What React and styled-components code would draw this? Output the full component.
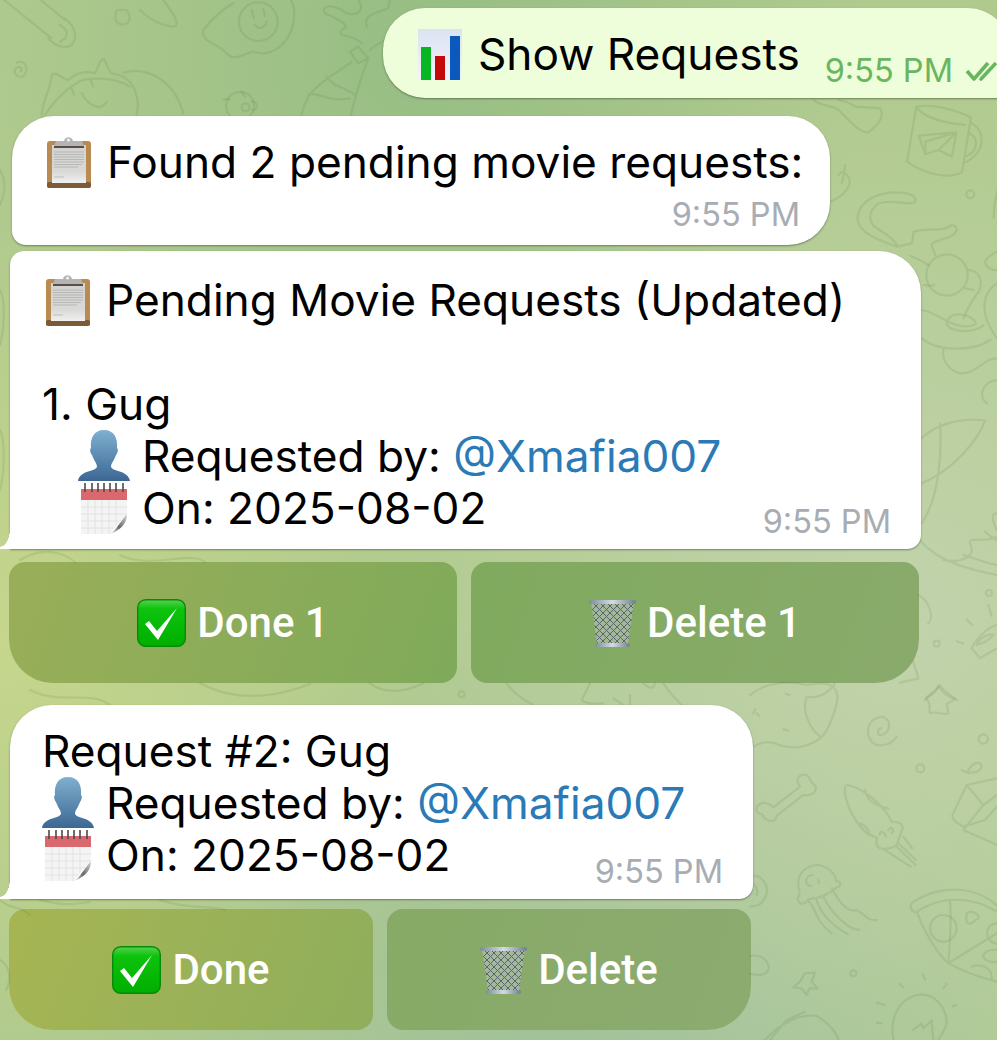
import styled, { createGlobalStyle } from "styled-components";

const GlobalStyle = createGlobalStyle`
  html, body {
    margin: 0;
    padding: 0;
  }
  body {
    font-family: Inter, Roboto, "Liberation Sans", sans-serif;
  }
`;

const Chat = styled.div`
  position: relative;
  width: 997px;
  height: 1040px;
  overflow: hidden;
  padding-top: 8px;
  box-sizing: border-box;
  display: flex;
  flex-direction: column;
  background:
    radial-gradient(circle at 0 640px, #c6d68c 0, rgba(198, 214, 140, 0) 420px),
    radial-gradient(circle at 900px 620px, #c2d3ac 0, rgba(194, 211, 172, 0) 560px),
    radial-gradient(circle at 620px 1120px, #9dbf9c 0, rgba(157, 191, 156, 0) 520px),
    radial-gradient(circle at 420px 40px, #96bd84 0, rgba(150, 189, 132, 0) 440px),
    #b0ca8e;
`;

const Wallpaper = styled.svg`
  position: absolute;
  left: 0;
  top: 0;
  width: 997px;
  height: 1040px;
  fill: none;
  stroke: rgba(62, 104, 42, 0.12);
  stroke-width: 2.2px;
  stroke-linecap: round;
  stroke-linejoin: round;

  * {
    vector-effect: non-scaling-stroke;
  }
`;

const Bubble = styled.div`
  position: relative;
  box-sizing: border-box;
  width: ${(p) => p.$width}px;
  margin-left: ${(p) => p.$left}px;
  margin-top: ${(p) => p.$top}px;
  padding: ${(p) => p.$padTop}px 0 ${(p) => p.$padBottom}px ${(p) => p.$padLeft}px;
  border-radius: ${(p) => p.$radius};
  background: ${(p) => (p.$out ? "#eefedb" : "#ffffff")};
  box-shadow: 0 1px 2px rgba(40, 62, 24, 0.5);
  color: #000000;
  font-size: 44.2px;
  line-height: 52px;

  ${(p) =>
    p.$tail &&
    `
    &::before {
      content: "";
      position: absolute;
      left: -10px;
      bottom: 0;
      width: 10px;
      height: 20px;
      background: radial-gradient(ellipse 10px 18px at 0 0, transparent 97%, #ffffff 100%);
    }
  `}
`;

const Line = styled.div`
  display: flex;
  align-items: center;
  height: 52px;
  padding-left: ${(p) => p.$indent || 0}px;
  white-space: nowrap;
`;

const EmojiSlot = styled.span`
  flex: none;
  display: flex;
  justify-content: center;
  width: 52px;
  margin-right: 12px;
`;

const Mention = styled.span`
  color: #2a7ab8;
  margin-left: 0.28em;
`;

const Meta = styled.div`
  position: absolute;
  right: ${(p) => p.$right}px;
  bottom: ${(p) => p.$bottom}px;
  display: flex;
  align-items: center;
  gap: 12px;
  font-size: 32.5px;
  line-height: 40px;
  color: ${(p) => (p.$out ? "#69b560" : "#a7adb3")};
`;

const ButtonRow = styled.div`
  display: grid;
  grid-template-columns: 1fr 1fr;
  gap: 14px;
  width: ${(p) => p.$width}px;
  margin-left: 9px;
  margin-top: ${(p) => p.$top}px;
`;

const KeyButton = styled.button`
  display: flex;
  align-items: center;
  justify-content: center;
  gap: 11px;
  height: 121px;
  padding: 0;
  border: 0;
  border-radius: ${(p) => (p.$side === "left" ? "16px 16px 16px 44px" : "16px 16px 44px 16px")};
  background: linear-gradient(110deg, ${(p) => p.$from}, ${(p) => p.$to});
  color: #ffffff;
  font-family: Roboto, "Liberation Sans", sans-serif;
  font-size: 42px;
  font-weight: 500;
`;

function ChartEmoji() {
  return (
    <svg width="44" height="51" viewBox="0 0 44 51">
      <defs>
        <linearGradient id="chartBg" x1="0" y1="0" x2="0" y2="1">
          <stop offset="0" stopColor="#dbe3f2" />
          <stop offset="1" stopColor="#f2f4fa" />
        </linearGradient>
      </defs>
      <rect width="44" height="51" fill="url(#chartBg)" />
      <rect x="3" y="18" width="10" height="33" fill="#08b522" />
      <rect x="17" y="27" width="10" height="24" fill="#c30a08" />
      <rect x="32" y="7" width="10" height="44" fill="#0b59bd" />
    </svg>
  );
}

function ClipboardEmoji() {
  return (
    <svg width="46" height="52" viewBox="0 0 46 52">
      <defs>
        <linearGradient id="clipPaper" x1="0" y1="0" x2="0" y2="1">
          <stop offset="0" stopColor="#d2d2d0" />
          <stop offset="0.7" stopColor="#d9d9d8" />
          <stop offset="1" stopColor="#f0f0f0" />
        </linearGradient>
      </defs>
      <rect x="1" y="5" width="44" height="47" rx="3" fill="#b98a52" />
      <rect x="1" y="46" width="44" height="6" rx="2" fill="#7c5a36" />
      <rect x="6" y="9" width="34" height="38" fill="url(#clipPaper)" />
      <path d="M8 16h30M8 18.5h30M8 21h30M8 23.5h30M8 26h30M8 28.5h28M8 31h24M8 41h10" stroke="#9a9a9a" strokeWidth="0.7" opacity="0.7" />
      <path d="M8 11h30" stroke="#57504a" strokeWidth="2" />
      <path d="M8 10 L10 5 H18 C19 0 26 0 27 5 H36 L38 10 Z" fill="#b4b4b2" />
      <circle cx="22.5" cy="4" r="1.5" fill="#f2f2f2" />
    </svg>
  );
}

function PersonEmoji() {
  return (
    <svg width="52" height="52" viewBox="0 0 52 52">
      <defs>
        <linearGradient id="personFill" x1="0" y1="0" x2="0" y2="1">
          <stop offset="0" stopColor="#7fb0cf" />
          <stop offset="1" stopColor="#3c6794" />
        </linearGradient>
      </defs>
      <path
        d="M26 0 C36 0 40 8 39 18 C41 20 39 24 38 25 C36 31 33 33 33 37 C35 42 50 40 52 51 H0 C2 40 17 42 19 37 C19 33 16 31 14 25 C13 24 11 20 13 18 C12 8 16 0 26 0 Z"
        fill="url(#personFill)"
      />
    </svg>
  );
}

function CalendarEmoji() {
  return (
    <svg width="46" height="52" viewBox="0 0 46 52">
      <defs>
        <linearGradient id="calCurl" x1="0" y1="1" x2="1" y2="0">
          <stop offset="0" stopColor="#ffffff" />
          <stop offset="0.45" stopColor="#6a6a6a" />
          <stop offset="1" stopColor="#d8d8d8" />
        </linearGradient>
      </defs>
      <rect y="7" width="46" height="45" fill="#f4f4f4" />
      <rect y="7" width="46" height="11" fill="#d9696e" />
      <path d="M7 18v34M14 18v34M21 18v34M28 18v34M35 18v34M0 25h46M0 32h46M0 39h46M0 46h46" stroke="#e2e2e2" strokeWidth="1" />
      <path d="M4 1v9M11 1v9M17 1v9M23 1v9M29 1v9M35 1v9M42 1v9" stroke="#4a4a4a" strokeWidth="1.6" />
      <path d="M30 52 C33 44 40 40 46 32 V52 Z" fill="#ffffff" />
      <path d="M28 52 C34 50 36 44 46 32 C46 42 40 46 34 50 Z" fill="url(#calCurl)" />
    </svg>
  );
}

function CheckEmoji() {
  return (
    <svg width="49" height="48" viewBox="0 0 49 48">
      <defs>
        <linearGradient id="checkFill" x1="0" y1="0" x2="0" y2="1">
          <stop offset="0" stopColor="#55d24f" />
          <stop offset="0.2" stopColor="#0dc30d" />
          <stop offset="1" stopColor="#00ae00" />
        </linearGradient>
      </defs>
      <rect x="0.7" y="0.7" width="47.6" height="46.6" rx="8" fill="url(#checkFill)" stroke="#078a0a" strokeWidth="1.4" />
      <path d="M8 25 L12 22 L20 32 L40 9 L21 41 Z" fill="#ffffff" strokeLinejoin="round" />
    </svg>
  );
}

function TrashEmoji() {
  return (
    <svg width="47" height="48" viewBox="0 0 47 48">
      <defs>
        <pattern id="trashMesh" width="7" height="7" patternUnits="userSpaceOnUse">
          <path d="M0 0 L7 7 M7 0 L0 7" stroke="#56656e" strokeWidth="1" />
        </pattern>
        <linearGradient id="trashRim" x1="0" y1="0" x2="1" y2="0">
          <stop offset="0" stopColor="#7c8c9b" />
          <stop offset="0.5" stopColor="#d4dce3" />
          <stop offset="1" stopColor="#6f7f8e" />
        </linearGradient>
      </defs>
      <path d="M2 3 L8 45 H39 L45 3 Z" fill="#b8c1bd" fillOpacity="0.6" />
      <path d="M2 3 L8 45 H39 L45 3 Z" fill="url(#trashMesh)" />
      <rect x="0" y="1" width="47" height="4" rx="2" fill="url(#trashRim)" />
      <rect x="6" y="44" width="35" height="4" rx="2" fill="url(#trashRim)" />
    </svg>
  );
}

function DoubleCheck() {
  return (
    <svg width="32" height="24" viewBox="0 0 32 24" fill="none" stroke="#69b560" strokeWidth="3.6" strokeLinejoin="round">
      <path d="M2 12 L9 20 L23 4" />
      <path d="M15 19 L16 20 L31 4" />
    </svg>
  );
}

function WallpaperDoodles() {
  return (
    <Wallpaper viewBox="0 0 997 1040">
      <g transform="scale(0.3333)">
        <path d="M0 -10 L155 115 M110 -10 L195 60 M195 55 C225 80 235 110 215 135 C195 150 160 135 145 115 M180 75 C205 90 210 110 180 125" />
        <path d="M350 30 C340 60 350 78 375 72 C395 65 390 45 380 30 Z M420 30 C450 60 490 80 525 80 C540 70 520 40 490 0" />
        <path d="M700 10 C680 20 640 50 610 90 C600 125 650 130 675 155 C700 190 730 160 760 155 C800 170 850 150 875 90 C890 40 880 10 870 -5" />
        <circle cx="775" cy="65" r="58" />
        <path d="M755 30 L762 55 M790 28 L795 48 M765 75 C775 90 795 85 800 65" />
        <path d="M1075 140 L1050 155 L1075 190 L1105 175 Z M1055 185 C1020 215 960 240 925 290 C910 320 905 340 900 360 M1105 175 C1085 230 1065 280 1050 360 M980 230 C1000 260 1030 260 1065 285 M925 285 C950 270 980 310 1050 295" />
        <path d="M1085 130 C1060 100 1000 115 1030 85 C1060 80 1000 50 975 40 C960 15 1000 10 1040 40 C1085 50 1090 20 1075 0 M1110 150 C1130 130 1150 125 1175 110 M1100 80 C1090 40 1130 40 1165 25 L1170 0" />
        <path d="M50 188 C75 175 90 210 70 228 C50 238 38 215 48 205 C58 195 70 205 62 215" />
        <path d="M125 350 C125 300 150 280 155 225 C165 210 190 240 205 240 C235 210 270 215 285 220 C295 200 305 170 312 178 C320 190 325 210 335 220 C370 225 400 240 410 290 C420 320 410 345 405 360 M370 218 C430 200 520 230 550 340 M250 240 C310 230 360 240 390 260 M245 280 C260 310 300 340 320 305 M135 345 C170 290 220 250 250 240 M215 265 L222 285 M272 240 L280 260" />
        <circle cx="720" cy="318" r="42" />
        <circle cx="737" cy="322" r="12" />
        <path d="M670 298 L690 298 M725 275 L735 290 M755 305 C775 305 775 330 758 330" />
      </g>

      <g transform="translate(797 95) scale(0.3333)">
        <path d="M358 35 C400 25 480 45 522 68 L495 232 C450 255 380 235 330 200 Z M358 35 C380 70 450 85 505 90 M525 85 C565 110 570 170 500 205 M518 115 C545 130 545 170 505 185" />
        <path d="M365 122 L478 112 L465 185 L425 165 L385 178 Z M385 178 L385 140 L478 112 L425 165" />
        <circle cx="520" cy="298" r="12" />
        <path d="M355 320 C360 300 330 290 280 293 C220 300 180 330 182 375 C190 420 260 440 300 455 L345 445 L350 410 C390 395 430 415 465 390 C490 395 480 420 445 430 C420 440 400 440 405 455 L415 480 M355 320 C340 335 290 310 245 325 C215 345 210 380 240 400 C260 415 280 420 300 450" />
        <circle cx="450" cy="540" r="62" />
        <path d="M340 482 C360 490 380 500 395 510 M380 570 C390 570 400 575 412 570 M515 525 C550 530 560 560 545 590 C530 610 510 640 500 670 M505 580 L530 585" />
        <path d="M600 470 C560 490 550 510 590 525 L600 525 M600 565 C560 590 540 650 600 730 M375 645 C420 650 470 710 530 690 C560 680 470 630 450 680 C440 710 530 720 560 690 M375 730 C420 770 530 770 580 735 M440 760 C430 800 470 850 520 830 C560 810 570 790 600 790 M590 370 C590 330 595 310 600 290 M600 855 C560 860 540 900 570 925" />
        <path d="M100 320 C150 300 170 260 150 240 C140 225 130 232 125 240 M145 210 L135 265" />
        <path d="M50 15 C70 35 120 30 130 50 C160 80 190 115 215 112 C240 90 265 70 250 40 L175 35 C150 15 130 20 125 15" />
      </g>

      <g transform="translate(890 400) scale(0.3333)">
        <path d="M95 115 C130 80 200 50 285 62 C265 120 190 210 95 250 M150 70 C155 150 150 290 95 370 M80 410 C120 460 170 495 320 525 M220 465 C270 480 290 490 320 495 M240 430 C260 470 215 490 160 480 M320 340 C300 340 310 370 320 390 M285 395 C300 410 320 420 320 420 M240 425 C250 410 280 430 320 410" />
        <circle cx="297" cy="579" r="9" />
        <circle cx="140" cy="731" r="9" />
        <path d="M295 615 L305 648 M230 658 L246 675 M200 724 L220 731 M245 745 C265 705 300 680 321 675 M245 745 L270 775 M270 775 L321 745 M260 735 C270 710 300 700 310 705 C300 720 280 730 260 735 M105 900 C115 880 135 880 150 855 C165 880 185 885 200 900 M85 585 C115 600 135 650 115 670 M70 785 L85 835 L30 848" />
      </g>

      <g transform="translate(750 680) scale(0.3333)">
        <path d="M0 45 C40 10 110 0 170 15 C240 0 265 20 262 60 C250 120 225 165 210 175 C170 205 120 210 75 190 C40 180 20 195 0 205 M255 10 C230 50 190 55 170 50 C155 90 175 140 210 170 M15 88 L10 100 M20 100 L28 108 M100 148 L116 152 M108 42 L118 45" />
        <path d="M565 18 C575 30 580 45 615 58 L590 72 L595 100 C585 110 565 90 540 100 C535 85 545 70 528 55 C545 45 555 40 565 18" />
        <path d="M440 170 C425 195 385 205 365 185 C340 150 360 115 395 110 C425 115 425 155 395 165 C380 165 380 145 395 145" />
        <circle cx="700" cy="177" r="14" />
        <circle cx="511" cy="265" r="12" />
        <circle cx="310" cy="880" r="9" />
        <path d="M30 372 C15 380 15 400 35 402 C45 425 75 432 80 408 L160 345 C185 350 205 335 195 315 C180 310 180 290 170 285 C145 280 135 300 150 320 L70 382 C60 370 40 365 30 372" />
        <path d="M285 320 C280 360 310 420 345 455 C360 470 380 470 382 475 C375 490 380 505 400 507 L482 560 M440 500 L497 555 M445 490 L498 540 M460 470 L487 505 M290 315 C330 320 400 370 425 425 C440 425 460 430 458 445 C450 465 445 480 440 495 C430 505 415 505 400 507 M345 330 C350 365 385 380 415 385 M325 430 C340 430 355 445 360 465 M390 465 C385 450 405 455 408 470 M415 450 C425 435 435 450 425 460" />
        <path d="M145 620 C140 580 170 555 205 555 C240 560 260 590 258 603 C275 605 275 620 260 622 C240 640 210 655 175 658 C160 680 145 670 143 655 C150 645 150 630 145 620 M175 665 C200 680 190 720 245 760 M200 660 C210 700 250 740 293 762 M220 650 C240 690 290 750 328 750 M245 625 C265 660 290 700 320 690 C340 700 355 725 380 720 M188 585 C165 585 160 620 185 618 M205 600 L207 610" />
        <path d="M745 680 C680 620 580 610 490 665 C470 680 490 700 500 695 C520 750 560 820 595 850 C650 880 700 895 741 905 M500 695 C570 650 660 645 741 695 M600 660 C605 720 600 790 595 850 L741 760 M741 730 A30 30 0 0 0 741 790 M665 860 C690 850 725 860 725 895" />
        <circle cx="580" cy="745" r="40" />
        <path d="M650 700 C660 690 690 700 685 715 C670 720 670 735 655 730 C645 725 650 710 650 700 M700 825 C710 805 741 810 741 810 M741 845 C720 850 700 840 700 825" />
        <path d="M165 880 L195 878 L185 905 L203 925 L178 925 L170 945 L155 925 L130 922 L150 905 Z" />
        <path d="M430 1080 C420 1020 440 960 500 945 C560 935 590 990 590 1030 C585 1050 575 1065 565 1080 M490 1050 L515 1030 L520 1045 L545 1022 L550 1080 M380 968 L405 975 M380 1028 L395 1030 M448 912 L460 922 M518 882 L525 898 M590 912 L580 925 M608 980 L618 975" />
        <path d="M635 270 C650 280 665 280 680 275 C700 265 700 250 680 248 C665 255 650 270 655 280 M610 400 L650 315 L740 295 M610 400 C600 415 620 430 640 440 L705 420 L741 380 M650 315 L700 375 L640 450 M640 450 L741 495 M700 375 L741 345" />
        <path d="M0 828 C40 820 60 850 55 870 C45 890 20 885 0 882 M45 1080 C90 1030 150 1000 200 1008 C240 1030 260 1060 265 1080 M60 1080 L110 1020 L165 995 M0 590 C30 580 55 610 50 640 C40 675 20 680 0 680 M0 610 C15 610 25 625 20 645" />
      </g>

      <g transform="translate(360 680) scale(0.3333)">
        <circle cx="305" cy="43" r="9" />
        <path d="M440 10 C460 40 490 60 520 75 M690 10 L665 60 C680 75 710 70 730 70 M850 10 C870 25 880 30 885 10 M910 10 C930 40 950 60 965 75 M760 55 L790 75 M810 45 L810 75 M30 10 C70 40 130 40 190 10" />
      </g>

      <path d="M20 560 C40 548 60 550 75 562 M120 555 C150 570 190 550 205 562 M30 690 C60 705 90 690 110 705 M200 683 C230 700 270 700 310 684 M0 900 C10 910 20 905 30 915 M0 960 C10 965 12 980 6 990 M40 900 C60 905 70 905 90 902 M160 900 C190 910 210 905 225 910" />
      <path d="M0 170 C6 180 6 190 0 205 M0 290 C6 300 4 330 0 345 M0 430 C5 440 5 470 0 490" />
    </Wallpaper>
  );
}

export default function App() {
  return (
    <>
      <GlobalStyle />
      <Chat>
        <WallpaperDoodles />

        <Bubble $out $width={627} $left={383} $top={0} $padTop={20} $padBottom={18} $padLeft={31} $radius="42px 42px 14px 42px">
          <Line>
            <EmojiSlot>
              <ChartEmoji />
            </EmojiSlot>
            Show Requests
          </Line>
          <Meta $out $right={13} $bottom={7}>
            9:55 PM
            <DoubleCheck />
          </Meta>
        </Bubble>

        <Bubble $width={818} $left={12} $top={18} $padTop={20} $padBottom={57} $padLeft={31} $radius="42px 42px 42px 14px">
          <Line>
            <EmojiSlot>
              <ClipboardEmoji />
            </EmojiSlot>
            Found 2 pending movie requests:
          </Line>
          <Meta $right={30} $bottom={10}>9:55 PM</Meta>
        </Bubble>

        <Bubble $tail $width={911} $left={10} $top={6} $padTop={23} $padBottom={15} $padLeft={32} $radius="14px 42px 14px 0">
          <Line>
            <EmojiSlot>
              <ClipboardEmoji />
            </EmojiSlot>
            Pending Movie Requests (Updated)
          </Line>
          <Line />
          <Line>1. Gug</Line>
          <Line $indent={36}>
            <EmojiSlot>
              <PersonEmoji />
            </EmojiSlot>
            Requested by:<Mention>@Xmafia007</Mention>
          </Line>
          <Line $indent={36}>
            <EmojiSlot>
              <CalendarEmoji />
            </EmojiSlot>
            On: 2025-08-02
          </Line>
          <Meta $right={30} $bottom={7}>9:55 PM</Meta>
        </Bubble>

        <ButtonRow $width={910} $top={13}>
          <KeyButton $side="left" $from="#9aae58" $to="#7faa5a">
            <CheckEmoji />
            Done 1
          </KeyButton>
          <KeyButton $side="right" $from="#80aa5e" $to="#8aaa6c">
            <TrashEmoji />
            Delete 1
          </KeyButton>
        </ButtonRow>

        <Bubble $tail $width={743} $left={10} $top={22} $padTop={20} $padBottom={18} $padLeft={32} $radius="42px 42px 14px 0">
          <Line>Request #2: Gug</Line>
          <Line>
            <EmojiSlot>
              <PersonEmoji />
            </EmojiSlot>
            Requested by:<Mention>@Xmafia007</Mention>
          </Line>
          <Line>
            <EmojiSlot>
              <CalendarEmoji />
            </EmojiSlot>
            On: 2025-08-02
          </Line>
          <Meta $right={30} $bottom={7}>9:55 PM</Meta>
        </Bubble>

        <ButtonRow $width={742} $top={10}>
          <KeyButton $side="left" $from="#a6b553" $to="#8fae5c">
            <CheckEmoji />
            Done
          </KeyButton>
          <KeyButton $side="right" $from="#87aa66" $to="#8cab70">
            <TrashEmoji />
            Delete
          </KeyButton>
        </ButtonRow>
      </Chat>
    </>
  );
}
